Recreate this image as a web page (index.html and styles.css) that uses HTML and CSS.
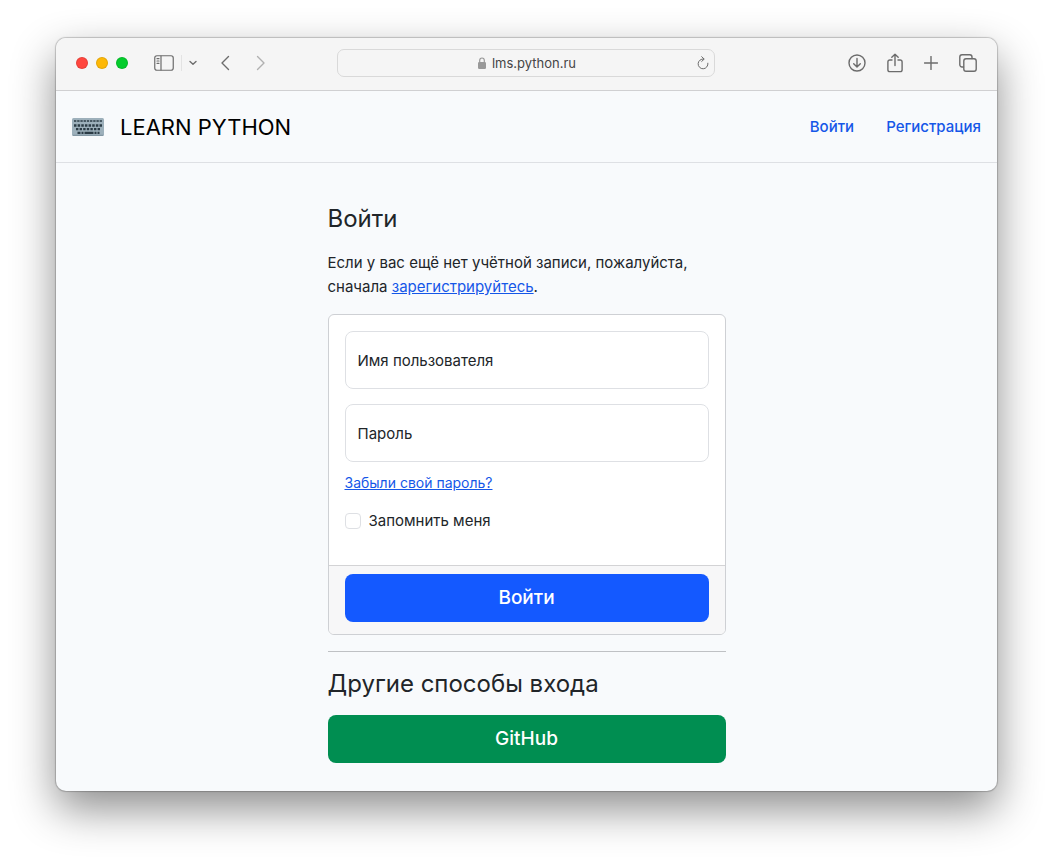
FILE: index.html
```html
<!DOCTYPE html>
<html lang="ru">
<head>
<meta charset="utf-8">
<meta name="viewport" content="width=device-width, initial-scale=1">
<title>Войти — Learn Python</title>
<link rel="stylesheet" href="styles.css">
</head>
<body>
<div class="window">
  <div class="toolbar">
    <div class="tools tools-left">
      <div class="lights">
        <button class="light close" aria-label="Закрыть"></button>
        <button class="light minimize" aria-label="Свернуть"></button>
        <button class="light expand" aria-label="Развернуть"></button>
      </div>
      <button class="tool sidebar" aria-label="Боковая панель">
        <svg width="20" height="16" viewBox="0 0 20 16"><rect x=".75" y=".75" width="18.5" height="14.5" rx="2.2"/><path d="M7 1v14M3 3.7h2M3 6h2M3 8.3h2"/></svg>
      </button>
      <button class="tool chevron" aria-label="Группы вкладок">
        <svg width="8" height="6" viewBox="0 0 8 6"><path d="M1 1.5l3 2.7 3-2.7"/></svg>
      </button>
      <button class="tool back" aria-label="Назад">
        <svg width="10" height="16" viewBox="0 0 10 16"><path d="M8.5 1.5L2 8l6.500 6.500"/></svg>
      </button>
      <button class="tool forward" aria-label="Вперёд">
        <svg width="10" height="16" viewBox="0 0 10 16"><path d="M1.500 1.500L8 8l-6.500 6.500"/></svg>
      </button>
    </div>
    <div class="address">
      <span class="host">
        <svg class="lock" width="8" height="12" viewBox="0 0 8 12"><rect y="5" width="8" height="7" rx="1.200" fill="#999"/><path d="M1.700 5.500V3.300a2.300 2.300 0 0 1 4.600 0v2.200" fill="none" stroke="#999" stroke-width="1.200"/></svg>
        lms.python.ru
      </span>
      <button class="tool reload" aria-label="Обновить">
        <svg width="12" height="14" viewBox="0 0 12 14"><path d="M10.900 7.200A4.900 4.900 0 1 1 6.700 3M4.700 .7l2.500 2.400-2.500 2.300"/></svg>
      </button>
    </div>
    <div class="tools tools-right">
      <button class="tool" aria-label="Загрузки">
        <svg width="18" height="18" viewBox="0 0 18 18"><circle cx="9" cy="9" r="8"/><path d="M9 4.500v8.300M5.700 9.700L9 13l3.300-3.300"/></svg>
      </button>
      <button class="tool" aria-label="Поделиться">
        <svg width="16" height="20" viewBox="0 0 16 20"><path d="M5 7H2.800A1.900 1.900 0 0 0 .9 8.900v7.800a1.900 1.900 0 0 0 1.900 1.900h10.400a1.900 1.900 0 0 0 1.900-1.900V8.900A1.900 1.900 0 0 0 13.200 7H11M8 12.500V1.300M4.800 4.300L8 1.200l3.200 3.100"/></svg>
      </button>
      <button class="tool" aria-label="Новая вкладка">
        <svg width="14" height="14" viewBox="0 0 14 14"><path d="M7 .5v13M.5 7h13"/></svg>
      </button>
      <button class="tool" aria-label="Обзор вкладок">
        <svg width="18" height="18" viewBox="0 0 18 18"><rect x="4.800" y="4.800" width="12.400" height="12.400" rx="2.200"/><path d="M4.500 13H3A2.200 2.200 0 0 1 .8 10.800V3A2.200 2.200 0 0 1 3 .8h7.800A2.200 2.200 0 0 1 13 3v1.500"/></svg>
      </button>
    </div>
  </div>
  <header class="navbar">
    <a class="brand" href="#">
      <svg width="32" height="18" viewBox="0 0 32 18">
        <rect width="32" height="18" rx="1.500" fill="#9db0bb"/>
        <path d="M.8 17.300h30.400" stroke="#7e929e"/>
        <g stroke="#2b3b45" fill="none">
          <path d="M2 3h28" stroke-width="1.600" stroke-dasharray="2.300 .91"/>
          <path d="M2 7.500h28" stroke-width="2.400" stroke-dasharray="2.500 1.142"/>
          <path d="M4 11.200h24" stroke-width="2.200" stroke-dasharray="2.400 1.200"/>
          <path d="M5.500 14.800h3m1 0h2m1 0h9m1 0h2m1 0h2" stroke-width="2.200"/>
        </g>
      </svg>
      <span>LEARN PYTHON</span>
    </a>
    <nav class="links">
      <a href="#login">Войти</a>
      <a href="#register">Регистрация</a>
    </nav>
  </header>
  <main class="content">
    <h1 class="heading">Войти</h1>
    <p class="intro">Если у вас ещё нет учётной записи, пожалуйста, сначала <a href="#register">зарегистрируйтесь</a>.</p>
    <form class="card" id="login">
      <div class="card-body">
        <div class="field">
          <input id="username" type="text" placeholder=" " autocomplete="username">
          <label for="username">Имя пользователя</label>
        </div>
        <div class="field">
          <input id="password" type="password" placeholder=" " autocomplete="current-password">
          <label for="password">Пароль</label>
        </div>
        <a class="forgot" href="#reset">Забыли свой пароль?</a>
        <div class="remember">
          <input id="remember" type="checkbox">
          <label for="remember">Запомнить меня</label>
        </div>
      </div>
      <div class="card-footer">
        <button class="button primary" type="submit">Войти</button>
      </div>
    </form>
    <hr class="divider">
    <h2 class="heading">Другие способы входа</h2>
    <button class="button success" type="button">GitHub</button>
  </main>
</div>
</body>
</html>
```
FILE: styles.css
```css
* { box-sizing: border-box; }

body {
  margin: 0;
  padding: 38px 56px 74px;
  background: #fff;
  color: #212529;
  font: 400 15px/24px Inter, "Liberation Sans", sans-serif;
}

a { color: #1557e8; }
button, input { font: inherit; }
svg { display: block; }

.window {
  overflow: hidden;
  border-radius: 10px;
  background: #f8fafc;
  box-shadow: 0 0 1px 1px rgba(0, 0, 0, .2), 0 18px 44px rgba(0, 0, 0, .45);
}

.toolbar {
  display: grid;
  grid-template-columns: 1fr minmax(160px, 378px) 1fr;
  align-items: center;
  height: 53px;
  padding: 0 20px 2px 19px;
  border-bottom: 1px solid #d0d0d2;
  background: #f5f5f5;
}

.tools { display: flex; align-items: center; }
.tools-right { justify-content: flex-end; gap: 21px; }
.lights { display: flex; gap: 8px; margin-left: 1px; }

.light {
  width: 12px;
  height: 12px;
  padding: 0;
  border: 1px solid rgba(0, 0, 0, .1);
  border-radius: 50%;
}
.close { background: #ff463e; }
.minimize { background: #fdb806; }
.expand { background: #04cc2c; }

.tool {
  padding: 0;
  border: 0;
  background: none;
  color: #6c6c6c;
}
.tool svg {
  fill: none;
  stroke: currentColor;
  stroke-width: 1.4;
  stroke-linecap: round;
  stroke-linejoin: round;
}
.sidebar { margin-left: 26px; }
.sidebar svg { stroke-width: 1.2; }
.chevron { margin-left: 7px; padding: 5px 0 5px 7px; border-left: 1px solid #e3e3e3; }
.back { margin-left: 23px; }
.forward { margin-left: 26px; color: #b0b0b0; }

.address {
  display: flex;
  align-items: center;
  height: 28px;
  padding: 0 5px 0 19px;
  border: 1px solid #d9d9d9;
  border-radius: 7px;
  color: #454545;
  font-size: 13px;
}
.host { display: flex; flex: 1; align-items: center; justify-content: center; gap: 6px; }
.reload svg { stroke-width: 1; }

.navbar {
  display: flex;
  align-items: center;
  justify-content: space-between;
  height: 72px;
  padding: 0 16px;
  border-bottom: 1px solid #dee0e4;
}
.brand {
  display: flex;
  align-items: center;
  gap: 16px;
  color: #000;
  font-size: 22px;
  text-decoration: none;
}
.links { display: flex; gap: 32px; font-weight: 500; }
.links a { text-decoration: none; }

.content {
  width: 100%;
  max-width: 398px;
  margin: 0 auto;
  padding: 40px 0 28px;
}

.heading { margin: 0; font-size: 24px; font-weight: 400; line-height: 32px; }
.intro { margin: 16px 0 15px; }

.card {
  overflow: hidden;
  border: 1px solid #ced0d4;
  border-radius: 6px;
  background: #fff;
}
.card-body { padding: 16px 16px 32px; }

.field { position: relative; margin-bottom: 15px; }
.field input {
  display: block;
  width: 100%;
  height: 58px;
  padding: 24px 12px 8px;
  border: 1px solid #dee0e4;
  border-radius: 8px;
  background: #fff;
  color: inherit;
}
.field label { position: absolute; top: 18px; left: 13px; pointer-events: none; }
.field input:focus + label,
.field input:not(:placeholder-shown) + label { top: 4px; font-size: 12px; line-height: 18px; }

.forgot { display: block; width: fit-content; margin-top: -6px; font-size: 14px; }

.remember { display: flex; align-items: center; gap: 8px; margin-top: 14px; }
.remember input {
  width: 16px;
  height: 16px;
  margin: 0;
  border: 1px solid #dee0e4;
  border-radius: 4px;
  background: #fff;
  appearance: none;
}
.remember input:checked { background: #1557ff; }

.card-footer { padding: 8px 16px 12px; border-top: 1px solid #d3d3d5; background: #f7f7f8; }

.button {
  display: block;
  width: 100%;
  height: 48px;
  border: 0;
  border-radius: 8px;
  color: #fff;
  font-size: 19px;
  font-weight: 500;
}
.primary { background: #1459ff; }
.success { background: #008e51; }

.divider { margin: 16px 0; border: 0; border-top: 1px solid #bfc1c4; }
.divider + .heading { margin-bottom: 15px; }
```
